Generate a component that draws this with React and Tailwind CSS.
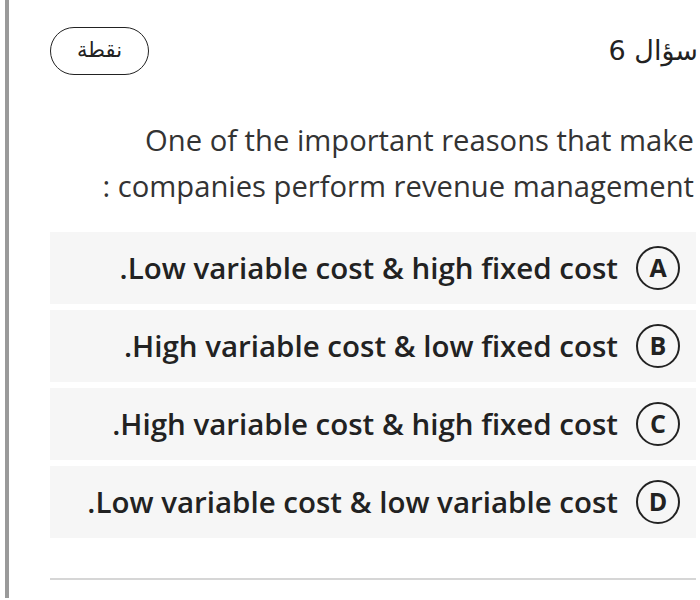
export default function App() {
  const options = [
    { letter: "A", text: ".Low variable cost & high fixed cost" },
    { letter: "B", text: ".High variable cost & low fixed cost" },
    { letter: "C", text: ".High variable cost & high fixed cost" },
    { letter: "D", text: ".Low variable cost & low variable cost" },
  ];
  return (
    <div className="w-[700px] h-[600px] bg-white flex overflow-hidden" style={{ fontFamily: '"Open Sans", "DejaVu Sans", sans-serif' }}>
      <div className="w-[4px] h-[598px] ml-[5px] bg-[#9a9a9a] shrink-0" />
      <div className="ml-[41px] w-[646px] flex flex-col">
        <div className="mt-[27px] flex items-center justify-between">
          <div className="w-[99px] h-[48px] rounded-full border-[1.5px] border-[#222] flex items-center justify-center text-[21px] text-[#222]" style={{ fontFamily: '"DejaVu Sans", sans-serif' }} dir="rtl">
            نقطة
          </div>
          <div className="text-[27px] text-[#222] mr-[-2px]" style={{ fontFamily: '"DejaVu Sans", sans-serif' }} dir="rtl">
            سؤال 6
          </div>
        </div>
        <div className="mt-[42px] text-right text-[29.2px] leading-[46px] text-[#333] pr-[2px]">
          <div>One of the important reasons that make</div>
          <div>: companies perform revenue management</div>
        </div>
        <div className="mt-[23px] flex flex-col gap-[6px]">
          {options.map((o) => (
            <div key={o.letter} className="h-[72px] bg-[#f6f6f6] flex items-center justify-end gap-[18px] pr-[16px]">
              <span className="text-[29.5px] font-semibold text-[#222]">{o.text}</span>
              <span className="w-[44px] h-[44px] rounded-full border-[2.5px] border-[#222] flex items-center justify-center text-[25px] font-bold text-[#222] shrink-0">
                {o.letter}
              </span>
            </div>
          ))}
        </div>
        <div className="mt-[40px] h-[2px] bg-[#d6d6d6]" />
      </div>
    </div>
  );
}
